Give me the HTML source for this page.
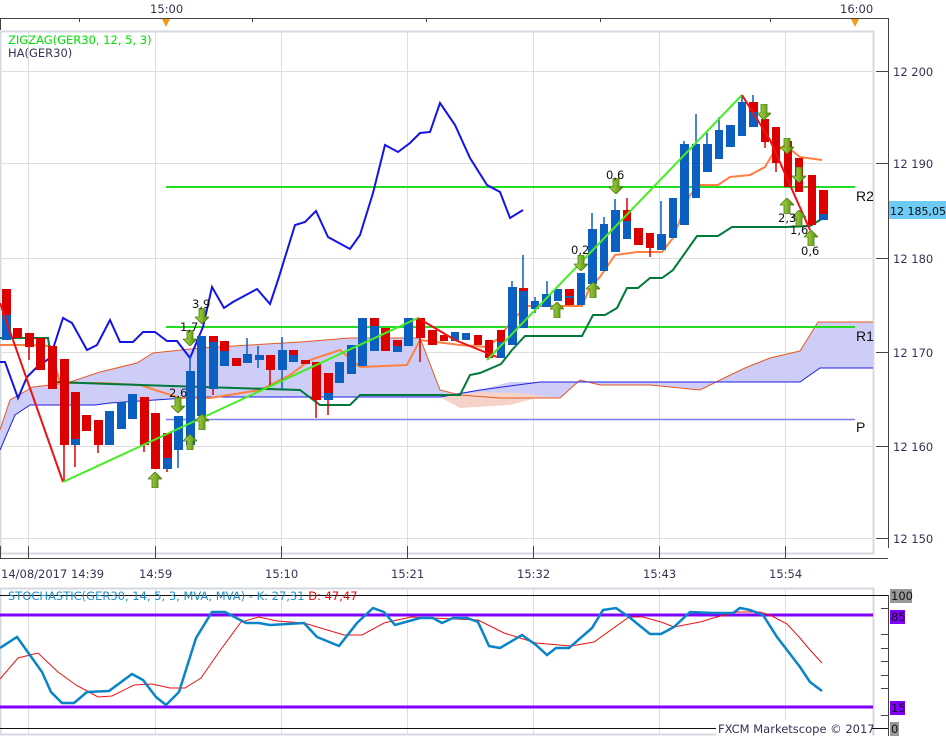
<!DOCTYPE html>
<html><head><meta charset="utf-8"><style>
body{margin:0;background:#fff;width:946px;height:736px;overflow:hidden;font-family:"Liberation Sans",sans-serif}
svg{display:block}
.t{font-family:"DejaVu Sans","Liberation Sans",sans-serif;font-size:11.5px;fill:#333355}
.r{fill:#dd0000}.b{fill:#0a5fc0}
</style></head><body>
<svg width="946" height="736" viewBox="0 0 946 736" xmlns="http://www.w3.org/2000/svg">
<defs>
<linearGradient id="ga" x1="0" y1="0" x2="1" y2="0"><stop offset="0" stop-color="#b6e04a"/><stop offset="1" stop-color="#4f8a10"/></linearGradient>
<symbol id="up" viewBox="0 0 14 16"><path d="M7 0 L14 7 L10 7 L10 16 L4 16 L4 7 L0 7 Z" fill="url(#ga)" stroke="#4a7a10" stroke-width="0.8"/></symbol>
<symbol id="dn" viewBox="0 0 14 16"><path d="M7 16 L14 9 L10 9 L10 0 L4 0 L4 9 L0 9 Z" fill="url(#ga)" stroke="#4a7a10" stroke-width="0.8"/></symbol>
</defs>
<text x="150" y="13" class="t">15:00</text><text x="840" y="13" class="t">16:00</text>
<line x1="0" y1="18.5" x2="888" y2="18.5" stroke="#444"/>
<line x1="0.5" y1="18" x2="0.5" y2="30" stroke="#444"/>
<line x1="79.5" y1="18" x2="79.5" y2="22" stroke="#444"/><line x1="252.5" y1="18" x2="252.5" y2="22" stroke="#444"/>
<line x1="426.5" y1="18" x2="426.5" y2="22" stroke="#444"/><line x1="600.5" y1="18" x2="600.5" y2="22" stroke="#444"/>
<line x1="770.5" y1="18" x2="770.5" y2="22" stroke="#444"/>
<path d="M162 19 L170 19 L166 27Z" fill="#f39a1a"/><path d="M851 19 L859 19 L855 27Z" fill="#f39a1a"/>
<rect x="0.5" y="31.5" width="873" height="522" fill="none" stroke="#d4d8e0" stroke-width="2"/>
<g stroke="#dedede" stroke-width="1">
<line x1="0" y1="71.5" x2="873" y2="71.5"/><line x1="0" y1="163.5" x2="873" y2="163.5"/><line x1="0" y1="258.5" x2="873" y2="258.5"/>
<line x1="0" y1="352.5" x2="873" y2="352.5"/><line x1="0" y1="446.5" x2="873" y2="446.5"/><line x1="0" y1="538.5" x2="873" y2="538.5"/>
<line x1="28.5" y1="32" x2="28.5" y2="553"/><line x1="155.5" y1="32" x2="155.5" y2="553"/><line x1="281.5" y1="32" x2="281.5" y2="553"/>
<line x1="407.5" y1="32" x2="407.5" y2="553"/><line x1="533.5" y1="32" x2="533.5" y2="553"/><line x1="659.5" y1="32" x2="659.5" y2="553"/><line x1="785.5" y1="32" x2="785.5" y2="553"/>
</g>
<text x="8" y="44" font-size="11.5" fill="#00e000" font-family="DejaVu Sans,sans-serif">ZIGZAG(GER30, 12, 5, 3)</text>
<text x="8" y="57" font-size="11.5" fill="#333355" font-family="DejaVu Sans,sans-serif">HA(GER30)</text>
<path d="M0 430 L10 400 L33 387 L67 383 L100 372 L137 363 L153 353 L200 348 L300 342 L350 338 L420 338 L440 390 L460 395 L500 398 L560 398 L580 380 L600 385 L650 385 L700 390 L720 380 L745 368 L770 358 L800 351 L818 322 L873 322 L873 368 L820 368 L800 382 L720 382 L660 382 L560 382 L540 382 L510 382 L480 390 L440 397 L200 397 L110 403 L95 405 L30 405 L15 415 L0 450Z" fill="#cdcdf7"/>
<path d="M440 397 L460 408 L510 405 L540 397 L560 398 L520 393 L480 392Z" fill="#f5d3c8"/>
<path d="M0 430 L10 400 L33 387 L67 383 L100 372 L137 363 L153 353 L200 348 L300 342 L350 338 L420 338 L440 390 L460 395 L500 398 L560 398 L580 380 L600 385 L650 385 L700 390 L720 380 L745 368 L770 358 L800 351 L818 322 L873 322" fill="none" stroke="#e65a20" stroke-width="1"/>
<path d="M0 450 L15 415 L30 405 L95 405 L110 403 L200 397 L440 397 L480 390 L540 382 L760 382 L800 382 L820 368 L873 368" fill="none" stroke="#2020e0" stroke-width="1"/>
<line x1="166" y1="187" x2="855" y2="187" stroke="#22dd22" stroke-width="2"/>
<line x1="166" y1="327" x2="855" y2="327" stroke="#22dd22" stroke-width="2"/>
<line x1="166" y1="419.5" x2="855" y2="419.5" stroke="#7c7cee" stroke-width="1.5"/>
<text x="856" y="201" font-size="14" fill="#111" font-family="Liberation Sans,sans-serif">R2</text>
<text x="856" y="341" font-size="14" fill="#111" font-family="Liberation Sans,sans-serif">R1</text>
<text x="856" y="432" font-size="14" fill="#111" font-family="Liberation Sans,sans-serif">P</text>
<polyline fill="none" stroke="#ff8040" stroke-width="2" points="0,345 30,345 50,346 60,383 100,383 140,385 180,398 210,398 260,390 290,375 310,360 340,350 360,367 407,365 420,340 460,345 487,347 500,337 512,320 528,306 582,306 590,287 600,277 615,255 637,252 662,252 673,238 680,220 690,195 700,185 718,185 730,177 750,175 765,167 772,155 785,145 800,157 822,160"/>
<polyline fill="none" stroke="#007a3a" stroke-width="2" points="0,338 48,338 55,382 140,385 300,390 320,405 350,405 360,395 460,395 470,375 480,373 501,364 512,350 525,336 582,336 593,315 605,315 617,308 627,288 638,288 650,278 662,278 673,270 697,236 718,236 732,227 786,227 810,226 825,217"/>
<polyline fill="none" stroke="#1414e6" stroke-width="2" points="0,362 5,362 18,398 27,377 37,367 50,358 63,318 72,323 87,350 97,345 110,320 120,342 133,342 143,332 155,332 167,341 177,341 190,358 203,327 212,287 224,308 233,302 257,289 270,304 278,280 295,225 305,222 316,211 328,237 350,249 360,235 373,193 385,145 398,152 410,143 420,133 430,132 440,103 455,125 470,158 487,185 500,192 510,218 523,210"/>
<g stroke-width="1.5">
<line x1="29" y1="333" x2="29" y2="360" stroke="#d00"/><line x1="64" y1="445" x2="64" y2="482" stroke="#d00"/>
<line x1="75" y1="445" x2="75" y2="467" stroke="#d00"/><line x1="98" y1="445" x2="98" y2="453" stroke="#d00"/>
<line x1="144" y1="445" x2="144" y2="452" stroke="#d00"/><line x1="167" y1="469" x2="167" y2="472" stroke="#d00"/>
<line x1="178" y1="450" x2="178" y2="468" stroke="#0a5fc0"/><line x1="190" y1="355" x2="190" y2="371" stroke="#0a5fc0"/>
<line x1="213" y1="336" x2="213" y2="395" stroke="#d00"/><line x1="247" y1="338" x2="247" y2="363" stroke="#0a5fc0"/>
<line x1="258" y1="346" x2="258" y2="368" stroke="#0a5fc0"/><line x1="270" y1="370" x2="270" y2="387" stroke="#d00"/>
<line x1="282" y1="337" x2="282" y2="390" stroke="#0a5fc0"/><line x1="316" y1="400" x2="316" y2="418" stroke="#d00"/>
<line x1="328" y1="400" x2="328" y2="415" stroke="#d00"/><line x1="420" y1="338" x2="420" y2="362" stroke="#d00"/>
<line x1="523" y1="255" x2="523" y2="288" stroke="#0a5fc0"/><line x1="512" y1="281" x2="512" y2="287" stroke="#0a5fc0"/>
<line x1="535" y1="297" x2="535" y2="313" stroke="#0a5fc0"/><line x1="547" y1="281" x2="547" y2="294" stroke="#0a5fc0"/>
<line x1="592" y1="213" x2="592" y2="229" stroke="#0a5fc0"/><line x1="604" y1="217" x2="604" y2="224" stroke="#0a5fc0"/>
<line x1="615" y1="199" x2="615" y2="210" stroke="#0a5fc0"/><line x1="627" y1="198" x2="627" y2="210" stroke="#d00"/>
<line x1="650" y1="248" x2="650" y2="257" stroke="#d00"/><line x1="661" y1="201" x2="661" y2="234" stroke="#0a5fc0"/>
<line x1="684" y1="141" x2="684" y2="144" stroke="#0a5fc0"/><line x1="696" y1="114" x2="696" y2="144" stroke="#0a5fc0"/>
<line x1="707" y1="133" x2="707" y2="144" stroke="#0a5fc0"/><line x1="719" y1="117" x2="719" y2="130" stroke="#0a5fc0"/>
<line x1="742" y1="96" x2="742" y2="102" stroke="#0a5fc0"/><line x1="753" y1="95" x2="753" y2="102" stroke="#0a5fc0"/>
<line x1="765" y1="142" x2="765" y2="148" stroke="#d00"/><line x1="776" y1="163" x2="776" y2="172" stroke="#d00"/>
</g>
<g>
<rect class="r" x="2" y="289" width="9" height="26"/><rect class="b" x="2" y="315" width="9" height="25"/>
<rect class="r" x="13" y="328" width="9" height="10"/>
<rect class="r" x="25" y="333" width="9" height="14"/>
<rect class="r" x="36" y="338" width="9" height="32"/>
<rect class="r" x="48" y="346" width="9" height="43"/>
<rect class="r" x="60" y="359" width="9" height="86"/>
<rect class="r" x="71" y="392" width="9" height="47"/><rect class="b" x="71" y="439" width="9" height="6"/>
<rect class="r" x="82" y="415" width="9" height="16"/>
<rect class="r" x="94" y="420" width="9" height="25"/>
<rect class="b" x="105" y="411" width="9" height="34"/>
<rect class="b" x="117" y="402" width="9" height="27"/>
<rect class="b" x="128" y="394" width="9" height="25"/>
<rect class="r" x="140" y="397" width="9" height="48"/>
<rect class="r" x="151" y="413" width="9" height="56"/>
<rect class="r" x="163" y="433" width="9" height="25"/><rect class="b" x="163" y="458" width="9" height="11"/>
<rect class="b" x="174" y="416" width="9" height="34"/>
<rect class="b" x="186" y="371" width="9" height="74"/>
<rect class="b" x="197" y="336" width="9" height="80"/>
<rect class="r" x="209" y="336" width="9" height="6"/><rect class="b" x="209" y="342" width="9" height="47"/>
<rect class="r" x="220" y="341" width="9" height="10"/><rect class="b" x="220" y="351" width="9" height="15"/>
<rect class="r" x="232" y="358" width="9" height="8"/>
<rect class="b" x="243" y="354" width="9" height="9"/>
<rect class="b" x="255" y="355" width="9" height="5"/>
<rect class="r" x="266" y="355" width="9" height="15"/>
<rect class="b" x="278" y="350" width="9" height="20"/>
<rect class="r" x="289" y="350" width="9" height="5"/><rect class="b" x="289" y="355" width="9" height="7"/>
<rect class="r" x="301" y="360" width="9" height="4"/>
<rect class="r" x="312" y="362" width="9" height="38"/>
<rect class="r" x="324" y="373" width="9" height="20"/><rect class="b" x="324" y="393" width="9" height="7"/>
<rect class="b" x="335" y="362" width="9" height="21"/>
<rect class="b" x="347" y="345" width="9" height="29"/>
<rect class="b" x="358" y="318" width="9" height="48"/>
<rect class="r" x="370" y="318" width="9" height="8"/><rect class="b" x="370" y="326" width="9" height="25"/>
<rect class="r" x="381" y="328" width="9" height="23"/>
<rect class="r" x="393" y="340" width="9" height="6"/><rect class="b" x="393" y="346" width="9" height="6"/>
<rect class="b" x="404" y="318" width="9" height="28"/>
<rect class="r" x="416" y="318" width="9" height="20"/>
<rect class="r" x="428" y="330" width="9" height="15"/>
<rect class="r" x="440" y="335" width="8" height="6"/>
<rect class="b" x="451" y="332" width="8" height="9"/>
<rect class="b" x="462" y="333" width="8" height="7"/>
<rect class="r" x="474" y="335" width="8" height="10"/>
<rect class="r" x="485" y="340" width="8" height="18"/>
<rect class="r" x="497" y="330" width="8" height="12"/><rect class="b" x="497" y="342" width="8" height="16"/>
<rect class="b" x="508" y="287" width="9" height="58"/>
<rect class="r" x="519" y="288" width="9" height="3"/><rect class="b" x="519" y="291" width="9" height="37"/>
<rect class="b" x="531" y="301" width="8" height="8"/>
<rect class="b" x="542" y="294" width="9" height="13"/>
<rect class="b" x="554" y="289" width="8" height="12"/>
<rect class="r" x="565" y="289" width="9" height="16"/><rect class="b" x="565" y="296" width="9" height="2"/>
<rect class="b" x="577" y="273" width="8" height="32"/>
<rect class="b" x="588" y="229" width="9" height="55"/>
<rect class="b" x="600" y="224" width="8" height="47"/>
<rect class="b" x="611" y="210" width="9" height="42"/>
<rect class="r" x="623" y="210" width="8" height="11"/><rect class="b" x="623" y="221" width="8" height="18"/>
<rect class="r" x="634" y="228" width="9" height="17"/>
<rect class="r" x="646" y="233" width="8" height="15"/>
<rect class="b" x="657" y="234" width="9" height="16"/>
<rect class="b" x="669" y="198" width="8" height="40"/>
<rect class="b" x="680" y="144" width="9" height="81"/>
<rect class="b" x="692" y="144" width="8" height="54"/>
<rect class="b" x="703" y="144" width="9" height="28"/>
<rect class="b" x="715" y="130" width="8" height="29"/>
<rect class="b" x="726" y="125" width="9" height="22"/>
<rect class="b" x="738" y="102" width="8" height="34"/>
<rect class="r" x="749" y="102" width="9" height="10"/><rect class="b" x="749" y="112" width="9" height="15"/>
<rect class="r" x="761" y="119" width="8" height="23"/>
<rect class="r" x="772" y="127" width="8" height="36"/>
<rect class="r" x="784" y="141" width="8" height="46"/>
<rect class="r" x="795" y="158" width="8" height="34"/>
<rect class="r" x="808" y="175" width="8" height="50"/>
<rect class="r" x="819" y="190" width="9" height="24"/><rect class="b" x="819" y="214" width="9" height="6"/>
</g>
<polyline fill="none" stroke="#ee1111" stroke-width="2" points="0,303 63,482"/>
<polyline fill="none" stroke="#44ee22" stroke-width="2" points="63,482 418,318"/>
<polyline fill="none" stroke="#ee1111" stroke-width="2" points="418,318 455,340 497,357"/>
<polyline fill="none" stroke="#44ee22" stroke-width="2" points="487,360 742,95"/>
<polyline fill="none" stroke="#ee1111" stroke-width="2" points="742,95 770,140 810,230"/>
<use href="#dn" x="183" y="330" width="14" height="16"/><use href="#dn" x="195" y="308" width="14" height="16"/>
<use href="#dn" x="171" y="397" width="14" height="16"/><use href="#dn" x="609" y="178" width="14" height="16"/>
<use href="#dn" x="757" y="104" width="14" height="16"/><use href="#dn" x="780" y="138" width="14" height="16"/>
<use href="#dn" x="792" y="167" width="14" height="16"/><use href="#dn" x="574" y="255" width="14" height="16"/>
<use href="#up" x="148" y="472" width="14" height="16"/><use href="#up" x="183" y="434" width="14" height="16"/>
<use href="#up" x="195" y="414" width="14" height="16"/><use href="#up" x="550" y="302" width="14" height="16"/>
<use href="#up" x="586" y="282" width="14" height="16"/><use href="#up" x="780" y="198" width="14" height="16"/>
<use href="#up" x="792" y="210" width="14" height="16"/><use href="#up" x="804" y="230" width="14" height="16"/>
<g class="t" style="fill:#111"><text x="192" y="308">3,9</text><text x="180" y="331">1,7</text><text x="169" y="397">2,6</text>
<text x="571" y="254">0,2</text><text x="606" y="179">0,6</text><text x="778" y="222">2,3</text><text x="790" y="234">1,6</text><text x="801" y="255">0,6</text></g>
<line x1="888.5" y1="18" x2="888.5" y2="548" stroke="#444"/>
<g stroke="#444">
<line x1="876" y1="71.5" x2="888" y2="71.5"/><line x1="876" y1="163.5" x2="888" y2="163.5"/><line x1="876" y1="258.5" x2="888" y2="258.5"/>
<line x1="876" y1="352.5" x2="888" y2="352.5"/><line x1="876" y1="446.5" x2="888" y2="446.5"/><line x1="876" y1="538.5" x2="888" y2="538.5"/>
</g>
<g class="t"><text x="893" y="76">12 200</text><text x="893" y="168">12 190</text><text x="893" y="263">12 180</text>
<text x="893" y="357">12 170</text><text x="893" y="451">12 160</text><text x="893" y="543">12 150</text></g>
<rect x="889" y="201" width="57" height="18" fill="#6ecbf5"/>
<text x="890" y="215" class="t" style="fill:#111;font-size:11px">12 185,05</text>
<line x1="0" y1="558.5" x2="888" y2="558.5" stroke="#444"/>
<g stroke="#444"><line x1="28.5" y1="546" x2="28.5" y2="558"/><line x1="155.5" y1="546" x2="155.5" y2="558"/><line x1="281.5" y1="546" x2="281.5" y2="558"/>
<line x1="407.5" y1="546" x2="407.5" y2="558"/><line x1="533.5" y1="546" x2="533.5" y2="558"/><line x1="659.5" y1="546" x2="659.5" y2="558"/><line x1="785.5" y1="546" x2="785.5" y2="558"/><line x1="0.5" y1="546" x2="0.5" y2="558"/></g>
<g class="t"><text x="1" y="578">14/08/2017 14:39</text><text x="139" y="578">14:59</text><text x="265" y="578">15:10</text>
<text x="391" y="578">15:21</text><text x="517" y="578">15:32</text><text x="643" y="578">15:43</text><text x="769" y="578">15:54</text></g>
<rect x="0.5" y="588.5" width="873" height="146" fill="none" stroke="#d4d8e0" stroke-width="2"/>
<g stroke="#dedede"><line x1="28.5" y1="589" x2="28.5" y2="734"/><line x1="155.5" y1="589" x2="155.5" y2="734"/><line x1="281.5" y1="589" x2="281.5" y2="734"/>
<line x1="407.5" y1="589" x2="407.5" y2="734"/><line x1="533.5" y1="589" x2="533.5" y2="734"/><line x1="659.5" y1="589" x2="659.5" y2="734"/><line x1="785.5" y1="589" x2="785.5" y2="734"/></g>
<line x1="0" y1="595.5" x2="888" y2="595.5" stroke="#111"/>
<line x1="0" y1="615" x2="873" y2="615" stroke="#8000ff" stroke-width="3"/>
<line x1="0" y1="707" x2="873" y2="707" stroke="#8000ff" stroke-width="3"/>
<line x1="0" y1="728.5" x2="888" y2="728.5" stroke="#111"/>
<text x="8" y="600" font-size="11.5" fill="#1a90d0" font-family="DejaVu Sans,sans-serif">STOCHASTIC(GER30, 14, 5, 3, MVA, MVA) - K: 27,31 <tspan fill="#ee0000">D: 47,47</tspan></text>
<polyline fill="none" stroke="#ee1111" stroke-width="1" points="0,679 18,658 38,653 58,672 76,685 98,697 112,696 134,685 152,684 170,688 185,688 201,678 219,652 241,622 259,617 277,621 304,623 344,635 362,635 384,623 411,617 433,618 455,619 478,620 504,633 536,643 571,646 594,642 629,617 643,617 661,622 674,627 700,622 717,617 737,612 760,612 770,615 787,624 800,638 810,650 822,663"/>
<polyline fill="none" stroke="#0a84c8" stroke-width="2.5" points="0,648 17,637 42,672 51,692 62,703 74,703 87,692 109,691 132,674 143,680 156,697 166,705 179,692 196,638 212,612 225,612 246,623 259,623 270,625 304,623 317,637 339,646 357,623 373,608 384,612 395,625 420,618 433,618 442,623 453,618 467,618 478,622 489,646 500,648 522,635 536,645 547,655 556,648 569,648 592,628 603,610 616,608 629,617 650,634 661,634 674,627 690,612 713,613 733,613 740,608 750,610 763,615 777,637 787,650 800,667 810,682 822,691"/>
<rect x="716" y="720" width="156" height="16" fill="#fff"/>
<text x="718" y="733" class="t">FXCM Marketscope © 2017</text>
<line x1="888.5" y1="595" x2="888.5" y2="736" stroke="#444"/>
<g stroke="#444"><line x1="881" y1="608.5" x2="888" y2="608.5"/><line x1="881" y1="634.5" x2="888" y2="634.5"/><line x1="881" y1="648.5" x2="888" y2="648.5"/><line x1="881" y1="661.5" x2="888" y2="661.5"/><line x1="881" y1="675.5" x2="888" y2="675.5"/><line x1="881" y1="688.5" x2="888" y2="688.5"/><line x1="881" y1="715.5" x2="888" y2="715.5"/></g>
<rect x="890" y="589" width="22" height="14" fill="#999"/><text x="891" y="600" class="t" style="fill:#111">100</text>
<rect x="890" y="610" width="15" height="14" fill="#8000ff"/><text x="891" y="621" class="t" style="fill:#111">85</text>
<rect x="890" y="701" width="15" height="14" fill="#8000ff"/><text x="891" y="712" class="t" style="fill:#111">15</text>
<rect x="890" y="722" width="9" height="14" fill="#999"/><text x="891" y="733" class="t" style="fill:#111">0</text>
</svg>
</body></html>
